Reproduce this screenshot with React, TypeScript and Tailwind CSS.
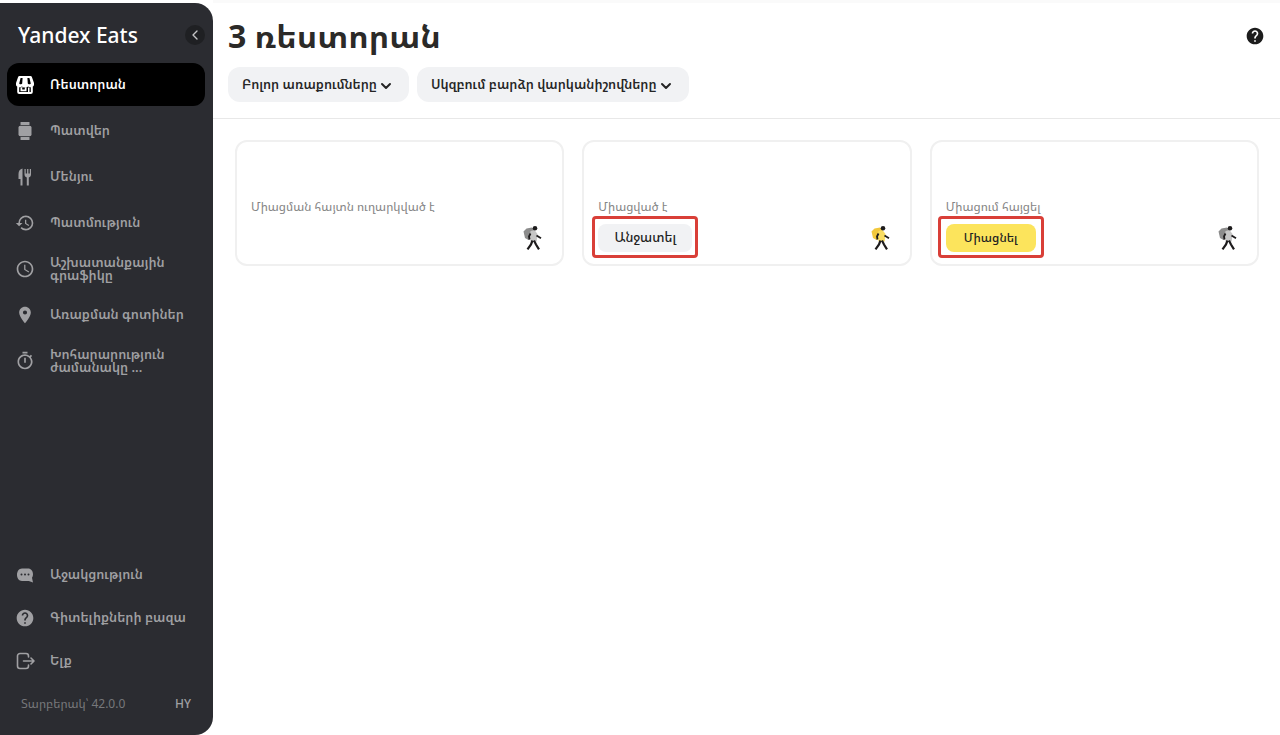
import type { ReactNode } from "react";
import { clsx } from "clsx";
import { MdHelp, MdHistory, MdLocationOn, MdOutlineTimer, MdSchedule } from "react-icons/md";
import { ChevronDown, ChevronLeft } from "lucide-react";

type NavItem = {
  label: string;
  icon: ReactNode;
  active?: boolean;
};

type Restaurant = {
  id: number;
  status: string;
  action?: "disable" | "enable";
  active?: boolean;
};

function StoreIcon() {
  return (
    <svg viewBox="0 0 20 20" className="size-5">
      <path
        d="M4.500 1h11a1.500 1.500 0 0 1 1.400 1L19 8v1.500c0 1-.5 1.700-1.200 2.100V17a2 2 0 0 1-2 2H4.200a2 2 0 0 1-2-2v-5.400C1.500 11.200 1 10.500 1 9.500V8l2.100-6A1.500 1.500 0 0 1 4.500 1z"
        fill="currentColor"
      />
      <g fill="#000">
        <path d="M5.600 3h2L7.200 8.500c-.2 1-3 1-3 0zM12.400 3h2l1.400 5.500c0 1-2.800 1-3 0z" />
        <path d="M4.200 12.200c1 .2 2 0 2.700-.7 1.500 1.300 4.700 1.300 6.200 0 .7.700 1.700.9 2.700.7V17H4.200z" />
      </g>
      <path d="M5.500 12.200h6v4h-6zM13 12.500h1.500V17H13z" fill="currentColor" />
      <path d="M7.200 12.500h2.600v2H7.200z" fill="#000" />
    </svg>
  );
}

function OrdersIcon() {
  return (
    <svg viewBox="0 0 20 20" className="size-5" fill="currentColor">
      <rect x="5.500" y="1" width="9" height="3" rx=".5" />
      <rect x="3.500" y="4.800" width="13" height="10.400" rx="1.800" />
      <rect x="5.500" y="16" width="9" height="3" rx=".5" />
    </svg>
  );
}

function MenuIcon() {
  return (
    <svg viewBox="0 0 20 20" className="size-5" fill="currentColor">
      <path d="M7.500 1.500v17h-2V12h-2V7c0-3 1.500-5 4-5.500z" />
      <path d="M9.500 2h1.200v4.500h1.400V2h1.300v4.500h1.400V2H16v5.500c0 1.600-.9 2.600-2.200 3v8h-2v-8c-1.300-.4-2.300-1.400-2.300-3z" />
    </svg>
  );
}

function ChatIcon() {
  return (
    <svg viewBox="0 0 20 20" className="size-5">
      <path
        d="M7 3.500h6c3 0 5 2.500 5 6 0 1.300-.4 2.400-1 3.300L18 17.500l-4.200-1.500H7c-3 0-5-2.800-5-6.200s2-6.300 5-6.300z"
        fill="currentColor"
      />
      <g fill="#2b2c31">
        <circle cx="6.500" cy="9.500" r="1" />
        <circle cx="10" cy="9.500" r="1" />
        <circle cx="13.500" cy="9.500" r="1" />
      </g>
    </svg>
  );
}

function ExitIcon() {
  return (
    <svg
      viewBox="0 0 20 20"
      className="size-5"
      fill="none"
      stroke="currentColor"
      strokeWidth="1.600"
      strokeLinecap="round"
      strokeLinejoin="round"
    >
      <path d="M13.500 6V5A2.500 2.500 0 0 0 11 2.500H5A2.500 2.500 0 0 0 2.500 5v10A2.500 2.500 0 0 0 5 17.500h6a2.500 2.500 0 0 0 2.500-2.500v-1" />
      <path d="M8.500 10H19M16 7l3 3-3 3" />
    </svg>
  );
}

function CourierIcon({ active }: { active?: boolean }) {
  return (
    <svg viewBox="0 0 24 26" className="h-[26px] w-6">
      <path
        d="M5.500 3.500 11 2.500l2 2.500-1 8-4.500 2L4 13 2.500 6.500z"
        fill={active ? "#f2c83c" : "#8c8c8c"}
      />
      <path d="m9.500 6 4-1 3 4-.8 7.500H9.500L9 11z" fill={active ? "#f8dc62" : "#c6c6c6"} />
      <circle cx="14" cy="3.200" r="2.300" fill="#1d1b1c" />
      <g stroke="#1d1b1c" fill="none">
        <path d="M9.500 8.500 8 11.500l.5 3M15.500 10.500l4.500 2.800" strokeWidth="1.800" />
        <path d="m11.500 15.500-1.500 4-3.500 4.800M13 15.500l2 4 3 4.800" strokeWidth="2.200" />
      </g>
    </svg>
  );
}

const mainNav: NavItem[] = [
  { label: "Ռեստորան", icon: <StoreIcon />, active: true },
  { label: "Պատվեր", icon: <OrdersIcon /> },
  { label: "Մենյու", icon: <MenuIcon /> },
  { label: "Պատմություն", icon: <MdHistory className="size-5" /> },
  { label: "Աշխատանքային գրաֆիկը", icon: <MdSchedule className="size-5" /> },
  { label: "Առաքման գոտիներ", icon: <MdLocationOn className="size-5" /> },
  { label: "Խոհարարություն ժամանակը ...", icon: <MdOutlineTimer className="size-5" /> },
];

const supportNav: NavItem[] = [
  { label: "Աջակցություն", icon: <ChatIcon /> },
  { label: "Գիտելիքների բազա", icon: <MdHelp className="size-5" /> },
  { label: "Ելք", icon: <ExitIcon /> },
];

const restaurants: Restaurant[] = [
  { id: 1, status: "Միացման հայտն ուղարկված է" },
  { id: 2, status: "Միացված է", action: "disable", active: true },
  { id: 3, status: "Միացում հայցել", action: "enable" },
];

function NavLink({ item }: { item: NavItem }) {
  return (
    <a
      href="#"
      className={clsx(
        "flex h-[43px] items-center gap-[15px] rounded-xl pr-4 pl-2 text-[13px] leading-[13px] font-semibold",
        item.active ? "bg-black text-white" : "text-[#a0a0a3]"
      )}
    >
      <span className="shrink-0">{item.icon}</span>
      <span>{item.label}</span>
    </a>
  );
}

function Sidebar() {
  return (
    <aside className="mt-[3px] flex w-[213px] shrink-0 flex-col rounded-r-[18px] bg-[#2b2c31] pr-2 pl-[7px]">
      <div className="flex h-[60px] items-center justify-between pt-1 pl-[11px]">
        <span className="text-[21px] leading-7 font-medium text-white">Yandex Eats</span>
        <button
          type="button"
          aria-label="Collapse"
          className="flex size-5 items-center justify-center rounded-full bg-[#1f2023] text-[#c4c4c6]"
        >
          <ChevronLeft className="size-4" />
        </button>
      </div>
      <nav className="flex flex-col gap-[3px]">
        {mainNav.map((item) => (
          <NavLink key={item.label} item={item} />
        ))}
      </nav>
      <nav className="mt-auto flex flex-col">
        {supportNav.map((item) => (
          <NavLink key={item.label} item={item} />
        ))}
      </nav>
      <div className="mb-5 flex h-[33px] items-center justify-between px-[14px] pt-[10px] text-xs">
        <span className="text-[#77787b]">Տարբերակ՝ 42.0.0</span>
        <button type="button" className="font-medium text-[#a0a0a3]">
          HY
        </button>
      </div>
    </aside>
  );
}

function FilterSelect({ name, label }: { name: string; label: string }) {
  return (
    <div className="relative">
      <select
        aria-label={name}
        className="h-[35px] appearance-none rounded-xl bg-[#f1f2f4] pr-8 pl-[14px] text-[13px] font-semibold text-[#252525]"
      >
        <option>{label}</option>
      </select>
      <ChevronDown
        className="pointer-events-none absolute top-[11px] right-[15px] size-4 text-[#252525]"
        strokeWidth={3}
      />
    </div>
  );
}

function ActionButton({ action }: { action: "disable" | "enable" }) {
  const enable = action === "enable";

  return (
    <div className="relative">
      <button
        type="button"
        className={clsx(
          "block h-7 rounded-lg font-medium text-[#222]",
          enable ? "w-[90px] bg-[#fce45c] text-xs" : "w-[94px] bg-[#f1f2f4] text-[13px]"
        )}
      >
        {enable ? "Միացնել" : "Անջատել"}
      </button>
      <span
        className={clsx(
          "pointer-events-none absolute -top-2 -bottom-[6px] rounded border-3 border-[#d93f38]",
          enable ? "-inset-x-2" : "-inset-x-[6px]"
        )}
      />
    </div>
  );
}

function RestaurantCard({ restaurant }: { restaurant: Restaurant }) {
  return (
    <article className="flex h-[126px] flex-col justify-end rounded-xl border-2 border-[#f0f0f0] px-[14px] pb-[9px]">
      <p className="text-xs leading-4 text-[#858585]">{restaurant.status}</p>
      <div className="mt-[6px] flex h-[34px] items-center justify-between pr-[3px]">
        {restaurant.action ? <ActionButton action={restaurant.action} /> : <span />}
        <CourierIcon active={restaurant.active} />
      </div>
    </article>
  );
}

export default function App() {
  return (
    <div className="flex min-h-screen bg-white font-['Noto_Sans','Noto_Sans_Armenian','DejaVu_Sans',sans-serif]">
      <Sidebar />
      <main className="min-w-0 flex-1 border-t-3 border-[#fafafa]">
        <header className="flex flex-col gap-2 border-b border-[#e8e8e8] pt-[9px] pr-[15px] pb-4 pl-[15px]">
          <div className="flex items-center justify-between">
            <h1 className="text-[32px] leading-[47px] font-bold text-[#2b2a28]">3 ռեստորան</h1>
            <button type="button" aria-label="Help" className="text-[#1c1c1c]">
              <MdHelp className="size-5" />
            </button>
          </div>
          <div className="flex gap-2">
            <FilterSelect name="Deliveries" label="Բոլոր առաքումները" />
            <FilterSelect name="Sorting" label="Սկզբում բարձր վարկանիշովները" />
          </div>
        </header>
        <section className="grid grid-cols-3 gap-[18px] pt-[21px] pr-[21px] pl-[22px]">
          {restaurants.map((restaurant) => (
            <RestaurantCard key={restaurant.id} restaurant={restaurant} />
          ))}
        </section>
      </main>
    </div>
  );
}
